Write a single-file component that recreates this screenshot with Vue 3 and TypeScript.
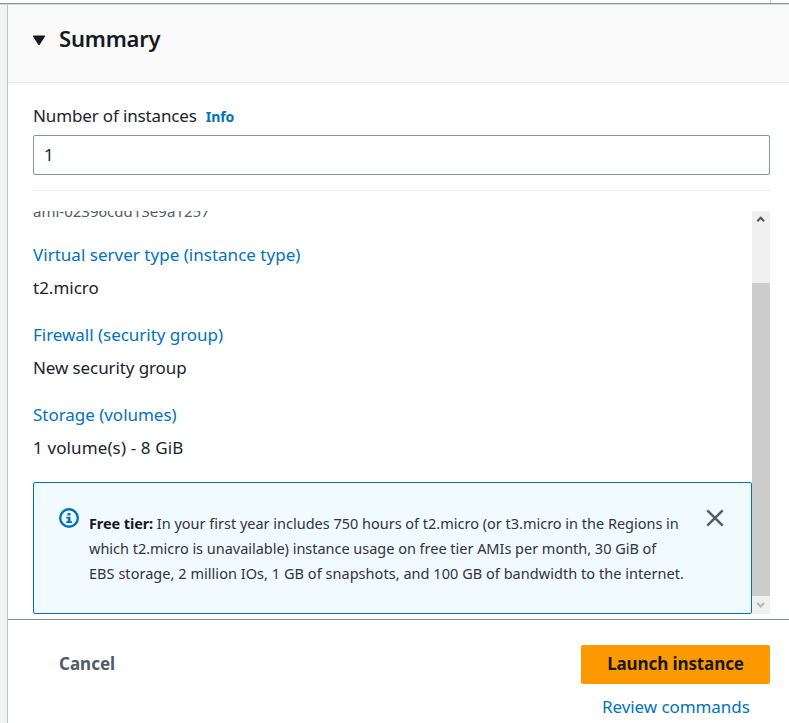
<script setup lang="ts">
import { ref } from 'vue'

interface SummaryItem {
  label: string
  value: string
  labelClass: string
  valueClass: string
}

const count = ref('1')
const items: SummaryItem[] = [
  { label: 'Virtual server type (instance type)', value: 't2.micro', labelClass: 'l-server', valueClass: 'v-server' },
  { label: 'Firewall (security group)', value: 'New security group', labelClass: 'l-firewall', valueClass: 'v-firewall' },
  { label: 'Storage (volumes)', value: '1 volume(s) - 8 GiB', labelClass: 'l-storage', valueClass: 'v-storage' },
]
</script>

<template>
  <div class="page">
    <div class="topbar"><span class="tick"></span></div>
    <div class="body">
      <div class="gutter"></div>
      <main class="panel">
        <header class="head">
          <svg class="caret" width="14" height="12" viewBox="0 0 14 12"><path d="M1.2 1h11.6L7 10z" fill="#16191f" stroke="#16191f" stroke-linejoin="round" /></svg>
          <h2><span>Summary</span></h2>
        </header>
        <section class="content">
          <div class="field-label"><span class="num">Number of instances</span><a class="info">Info</a></div>
          <input v-model="count" class="field" type="text" />
          <div class="divider"></div>
          <div class="scroll">
            <div class="list">
              <div class="ami"><span>ami-02396cdd13e9a1257</span></div>
              <div v-for="item in items" :key="item.label" class="item">
                <div><a :class="item.labelClass">{{ item.label }}</a></div>
                <div class="value"><span :class="item.valueClass">{{ item.value }}</span></div>
              </div>
              <div class="alert">
                <svg class="info-icon" width="20" height="20" viewBox="0 0 20 20">
                  <circle cx="10" cy="10" r="8.8" fill="none" stroke="#0073bb" stroke-width="2.4" />
                  <path d="M8.5 5h3v2.5h-3zM7.2 8.7h4.3v4.5H13V15H7.2v-1.8h1.5v-2.7H7.2z" fill="#0073bb" />
                </svg>
                <div class="alert-text">
                  <div><span class="a1"><b>Free tier:</b> In your first year includes 750 hours of t2.micro (or t3.micro in the Regions in</span></div>
                  <div><span class="a2">which t2.micro is unavailable) instance usage on free tier AMIs per month, 30 GiB of</span></div>
                  <div><span class="a3">EBS storage, 2 million IOs, 1 GB of snapshots, and 100 GB of bandwidth to the internet.</span></div>
                </div>
                <svg class="close" width="18" height="18" viewBox="0 0 18 18"><path d="M1.3 1.3l15.4 15.4M16.7 1.3L1.3 16.7" stroke="#545b64" stroke-width="2.4" /></svg>
              </div>
            </div>
            <div class="track">
              <svg class="arrow" width="18" height="17" viewBox="0 0 18 17"><path d="M5.3 10.2L8.7 6.8l3.4 3.4" fill="none" stroke="#555" stroke-width="2.1" /></svg>
              <div class="thumb"></div>
              <svg class="arrow" width="18" height="18" viewBox="0 0 18 18"><path d="M5.3 7L8.7 10.4 12.1 7" fill="none" stroke="#b5b5b5" stroke-width="2.1" /></svg>
            </div>
          </div>
        </section>
        <footer class="foot">
          <button class="cancel"><span>Cancel</span></button>
          <div class="actions">
            <button class="launch"><span>Launch instance</span></button>
            <a class="review"><span>Review commands</span></a>
          </div>
        </footer>
      </main>
    </div>
  </div>
</template>

<style>
body { margin: 0; background: #fff; overflow: hidden; }
</style>

<style scoped>
* { box-sizing: border-box; }
.page { width: 789px; height: 723px; overflow: hidden; display: flex; flex-direction: column; font: 17px/24px "Noto Sans", sans-serif; color: #20232a; white-space: nowrap; }
.topbar { height: 5px; flex: none; border-bottom: 1px solid #d5dbdb; box-shadow: inset 0 -1px #879596; background: #fff; display: flex; justify-content: flex-end; padding-right: 18px; }
.tick { width: 1px; height: 3px; background: #c3c9ca; }
.body { flex: 1; display: flex; min-height: 0; }
.gutter { width: 8px; background: #f2f3f3; border-right: 1px solid #bec2c3; flex: none; }
.panel { flex: 1; display: flex; flex-direction: column; min-width: 0; }
.head { height: 78px; flex: none; display: flex; align-items: center; padding: 0 24px 8px; background: #fafafa; border-bottom: 1px solid #eaeded; }
.caret { margin-top: 2px; }
h2 { margin: -4px 0 0 13px; font-size: 22px; line-height: 32px; font-weight: 650; color: #16191f; letter-spacing: -0.2px; }
a { color: #0073bb; }
.content { height: 536px; flex: none; padding: 21px 19px 0 25px; display: flex; flex-direction: column; }
.field-label { height: 31px; flex: none; display: flex; }
.num { letter-spacing: -0.14px; }
.info { font-size: 14px; font-weight: 700; margin-left: 9px; line-height: 26px; letter-spacing: -0.1px; }
.field { width: 100%; height: 40px; flex: none; border: 1px solid #879596; border-radius: 2px; padding: 0 11px 2px 10px; font: inherit; color: #20232a; outline: none; }
.divider { height: 1px; flex: none; margin-top: 15px; background: #eaeded; }
.scroll { margin-top: 20px; height: 403px; flex: none; overflow: hidden; display: flex; }
.list { width: 719px; margin-top: -10px; flex: none; }
.ami { height: 42px; font-size: 15px; line-height: 20px; color: #545b64; }
.item { height: 80px; }
.value { margin-top: 9px; }
.l-server { letter-spacing: 0.02px; }
.l-firewall, .l-storage { letter-spacing: -0.03px; }
.v-firewall { letter-spacing: -0.1px; }
.v-storage { letter-spacing: 0.12px; }
.alert { height: 132px; margin-top: -1px; border: 1px solid #0073bb; border-radius: 2px; background: #f1faff; display: flex; padding: 25px 27px 0 25px; }
.info-icon { flex: none; }
.alert-text { flex: 1; margin: 3px 0 0 10px; font-size: 14.5px; line-height: 25px; min-width: 0; color: #30343b; }
.a1 { letter-spacing: -0.01px; }
.a2 { letter-spacing: -0.02px; }
.a3 { letter-spacing: 0.04px; }
b { font-weight: 700; color: #16191f; letter-spacing: -0.1px; }
.close { flex: none; margin-top: 1px; }
.track { width: 18px; display: flex; flex-direction: column; background: #f0f0f0; }
.arrow { flex: none; }
.thumb { flex: 1; margin-top: 55px; background: #cdcdcd; }
.foot { flex: 1; border-top: 1px solid #879596; display: flex; justify-content: space-between; padding: 25px 19px 0 51px; }
button { border: 0; padding: 0 0 2px; font: 700 17px/24px "Noto Sans", sans-serif; background: none; height: 39px; }
.cancel { color: #545b64; }
.actions { width: 189px; display: flex; flex-direction: column; }
.launch { background: #ff9900; border-radius: 2px; color: #16191f; flex: none; letter-spacing: -0.1px; }
.review { margin: 11px 0 0 21px; letter-spacing: -0.07px; }
</style>
